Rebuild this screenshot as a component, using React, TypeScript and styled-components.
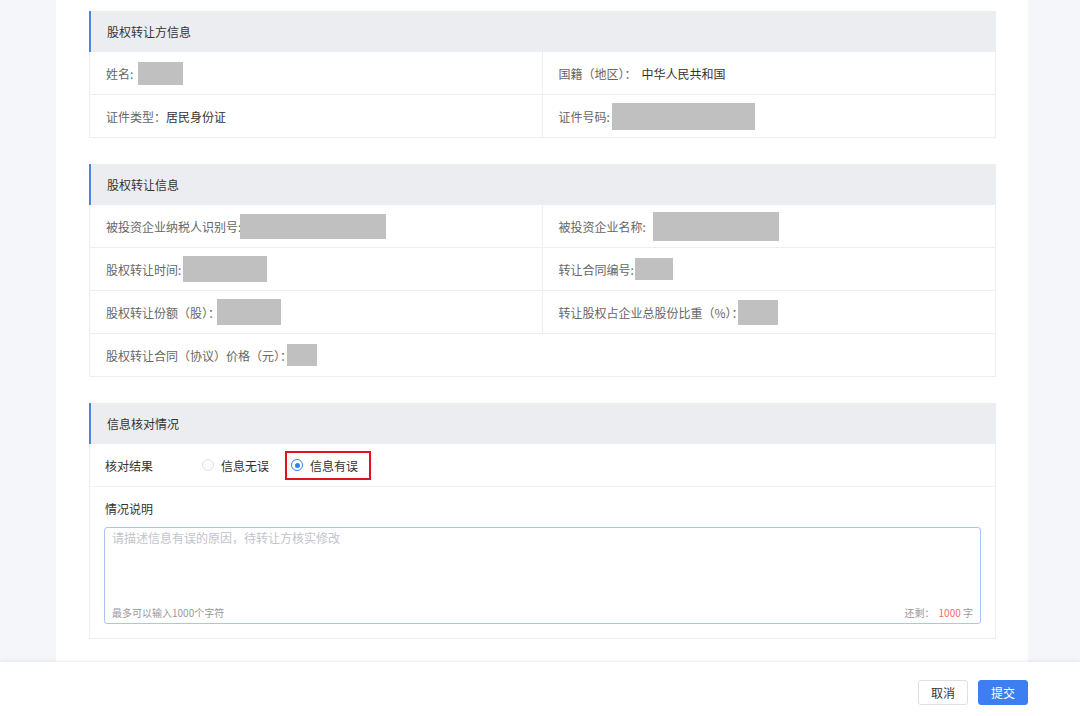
import styled, { createGlobalStyle } from "styled-components";

const GlobalStyle = createGlobalStyle`
  body {
    margin: 0;
    background: #f4f6f9;
    font-family: "Noto Sans CJK SC", "Noto Sans", sans-serif;
    font-size: 12px;
    color: #333;
  }
`;

interface IField {
  label: string;
  value?: string;
  valueGap?: number;
  mask?: number[];
  gap?: number;
  span?: boolean;
}

const transferor: IField[] = [
  { label: "姓名:", mask: [45, 23], gap: 5 },
  { label: "国籍（地区）：", value: "中华人民共和国", valueGap: 5 },
  { label: "证件类型：", value: "居民身份证" },
  { label: "证件号码:", mask: [143, 27], gap: 2 },
];

const transfer: IField[] = [
  { label: "被投资企业纳税人识别号:", mask: [146, 25], gap: -1 },
  { label: "被投资企业名称:", mask: [126, 29], gap: 7 },
  { label: "股权转让时间:", mask: [84, 26], gap: 2 },
  { label: "转让合同编号:", mask: [38, 22], gap: 1 },
  { label: "股权转让份额（股）：", mask: [64, 26], gap: -3 },
  { label: "转让股权占企业总股份比重（%）：", mask: [40, 25], gap: -6 },
  { label: "股权转让合同（协议）价格（元）：", mask: [30, 22], gap: -5, span: true },
];

const FieldGrid: React.FC<{ fields: IField[] }> = ({ fields }) => (
  <Grid>
    {fields.map((f) => (
      <Cell key={f.label} $span={f.span}>
        <Label>{f.label}</Label>
        {f.value && <Value $gap={f.valueGap ?? 0}>{f.value}</Value>}
        {f.mask && (
          <Mask
            $gap={f.gap ?? 4}
            style={{ width: f.mask[0], height: f.mask[1] }}
          />
        )}
      </Cell>
    ))}
  </Grid>
);

const App: React.FC = () => {
  return (
    <>
      <GlobalStyle />
      <Panel>
        <Section>
          <SectionTitle>股权转让方信息</SectionTitle>
          <FieldGrid fields={transferor} />
        </Section>

        <Section>
          <SectionTitle>股权转让信息</SectionTitle>
          <FieldGrid fields={transfer} />
        </Section>

        <Section>
          <SectionTitle>信息核对情况</SectionTitle>
          <CheckRow>
            <CheckLabel>核对结果</CheckLabel>
            <RadioGroup>
              <RadioOption>
                <RadioDot />
                信息无误
              </RadioOption>
              <Highlight>
                <RadioOption>
                  <RadioDot $checked />
                  信息有误
                </RadioOption>
              </Highlight>
            </RadioGroup>
          </CheckRow>
          <RemarkBlock>
            <RemarkLabel>情况说明</RemarkLabel>
            <TextBox>
              <Placeholder>请描述信息有误的原因，待转让方核实修改</Placeholder>
              <TextFoot>
                <span>最多可以输入1000个字符</span>
                <span>
                  还剩：<Count>1000</Count> 字
                </span>
              </TextFoot>
            </TextBox>
          </RemarkBlock>
        </Section>
      </Panel>

      <Footer>
        <Button>取消</Button>
        <Button $primary>提交</Button>
      </Footer>
    </>
  );
};

const Panel = styled.main`
  margin: 0 52px 0 56px;
  background: #fff;
  padding: 11px 32px 23px 33px;
  display: flex;
  flex-direction: column;
  gap: 26px;
`;

const Section = styled.section`
  border: 1px solid #ebeef3;
  border-top: none;
`;

const SectionTitle = styled.h3`
  margin: 0;
  height: 41px;
  display: flex;
  align-items: center;
  padding-left: 16px;
  background: #ebedf0;
  border-left: 2px solid #4a86e8;
  margin-left: -1px;
  font-size: 12px;
  font-weight: normal;
  color: #333;
`;

const Grid = styled.div`
  display: grid;
  grid-template-columns: 1fr 1fr;
`;

const Cell = styled.div<{ $span?: boolean }>`
  height: 42px;
  display: flex;
  align-items: center;
  padding-left: 16px;
  border-bottom: 1px solid #ebeef3;
  grid-column: ${({ $span }) => ($span ? "1 / -1" : "auto")};

  &:nth-child(odd) {
    border-right: ${({ $span }) => ($span ? "none" : "1px solid #ebeef3")};
  }

  &:nth-last-child(-n + 2):nth-child(odd),
  &:last-child {
    border-bottom: none;
  }
`;

const Label = styled.span`
  color: #666;
  white-space: nowrap;
`;

const Value = styled.span<{ $gap: number }>`
  color: #333;
  margin-left: ${({ $gap }) => $gap}px;
`;

const Mask = styled.span<{ $gap: number }>`
  display: inline-block;
  margin-left: ${({ $gap }) => $gap}px;
  background: #c0c0c0;
`;

const CheckRow = styled.div`
  height: 42px;
  display: flex;
  align-items: center;
  padding-left: 15px;
  border-bottom: 1px solid #f2f3f6;
`;

const CheckLabel = styled.span`
  color: #333;
  width: 97px;
`;

const RadioGroup = styled.div`
  display: flex;
  align-items: center;
  gap: 16px;
`;

const RadioOption = styled.label`
  display: flex;
  align-items: center;
  gap: 7px;
  color: #333;
`;

const RadioDot = styled.span<{ $checked?: boolean }>`
  width: 12px;
  height: 12px;
  box-sizing: border-box;
  border-radius: 50%;
  border: 1px solid ${({ $checked }) => ($checked ? "#3a7df0" : "#dcdfe6")};
  display: grid;
  place-content: center;

  &::after {
    content: "";
    width: 5px;
    height: 5px;
    border-radius: 50%;
    background: ${({ $checked }) => ($checked ? "#3a7df0" : "transparent")};
  }
`;

const Highlight = styled.div`
  border: 2px solid #e0141e;
  height: 29px;
  box-sizing: border-box;
  width: 86px;
  padding-left: 4px;
  display: flex;
  align-items: center;
`;

const RemarkBlock = styled.div`
  padding: 13px 14px 14px 14px;
`;

const RemarkLabel = styled.div`
  color: #333;
  margin-bottom: 10px;
  padding-left: 1px;
`;

const TextBox = styled.div`
  height: 97px;
  box-sizing: border-box;
  border: 1px solid #a9c5f2;
  border-radius: 3px;
  padding: 1px 7px 3px 7px;
  display: flex;
  flex-direction: column;
  justify-content: space-between;
`;

const Placeholder = styled.div`
  color: #c0c4cc;
`;

const TextFoot = styled.div`
  display: flex;
  justify-content: space-between;
  font-size: 10px;
  color: #999;
`;

const Count = styled.span`
  color: #f56c6c;
  margin-left: 4px;
`;

const Footer = styled.footer`
  height: 55px;
  box-sizing: border-box;
  background: #fff;
  box-shadow: 0 -1px 3px rgba(0, 0, 0, 0.08);
  display: flex;
  justify-content: flex-end;
  align-items: flex-start;
  gap: 10px;
  padding: 18px 52px 0 0;
`;

const Button = styled.button<{ $primary?: boolean }>`
  width: 50px;
  height: 25px;
  border-radius: 3px;
  font-family: inherit;
  font-size: 12px;
  cursor: pointer;
  border: 1px solid ${({ $primary }) => ($primary ? "#3d7ff0" : "#dcdfe6")};
  background: ${({ $primary }) => ($primary ? "#3d7ff0" : "#fff")};
  color: ${({ $primary }) => ($primary ? "#fff" : "#333")};
`;

export default App;
